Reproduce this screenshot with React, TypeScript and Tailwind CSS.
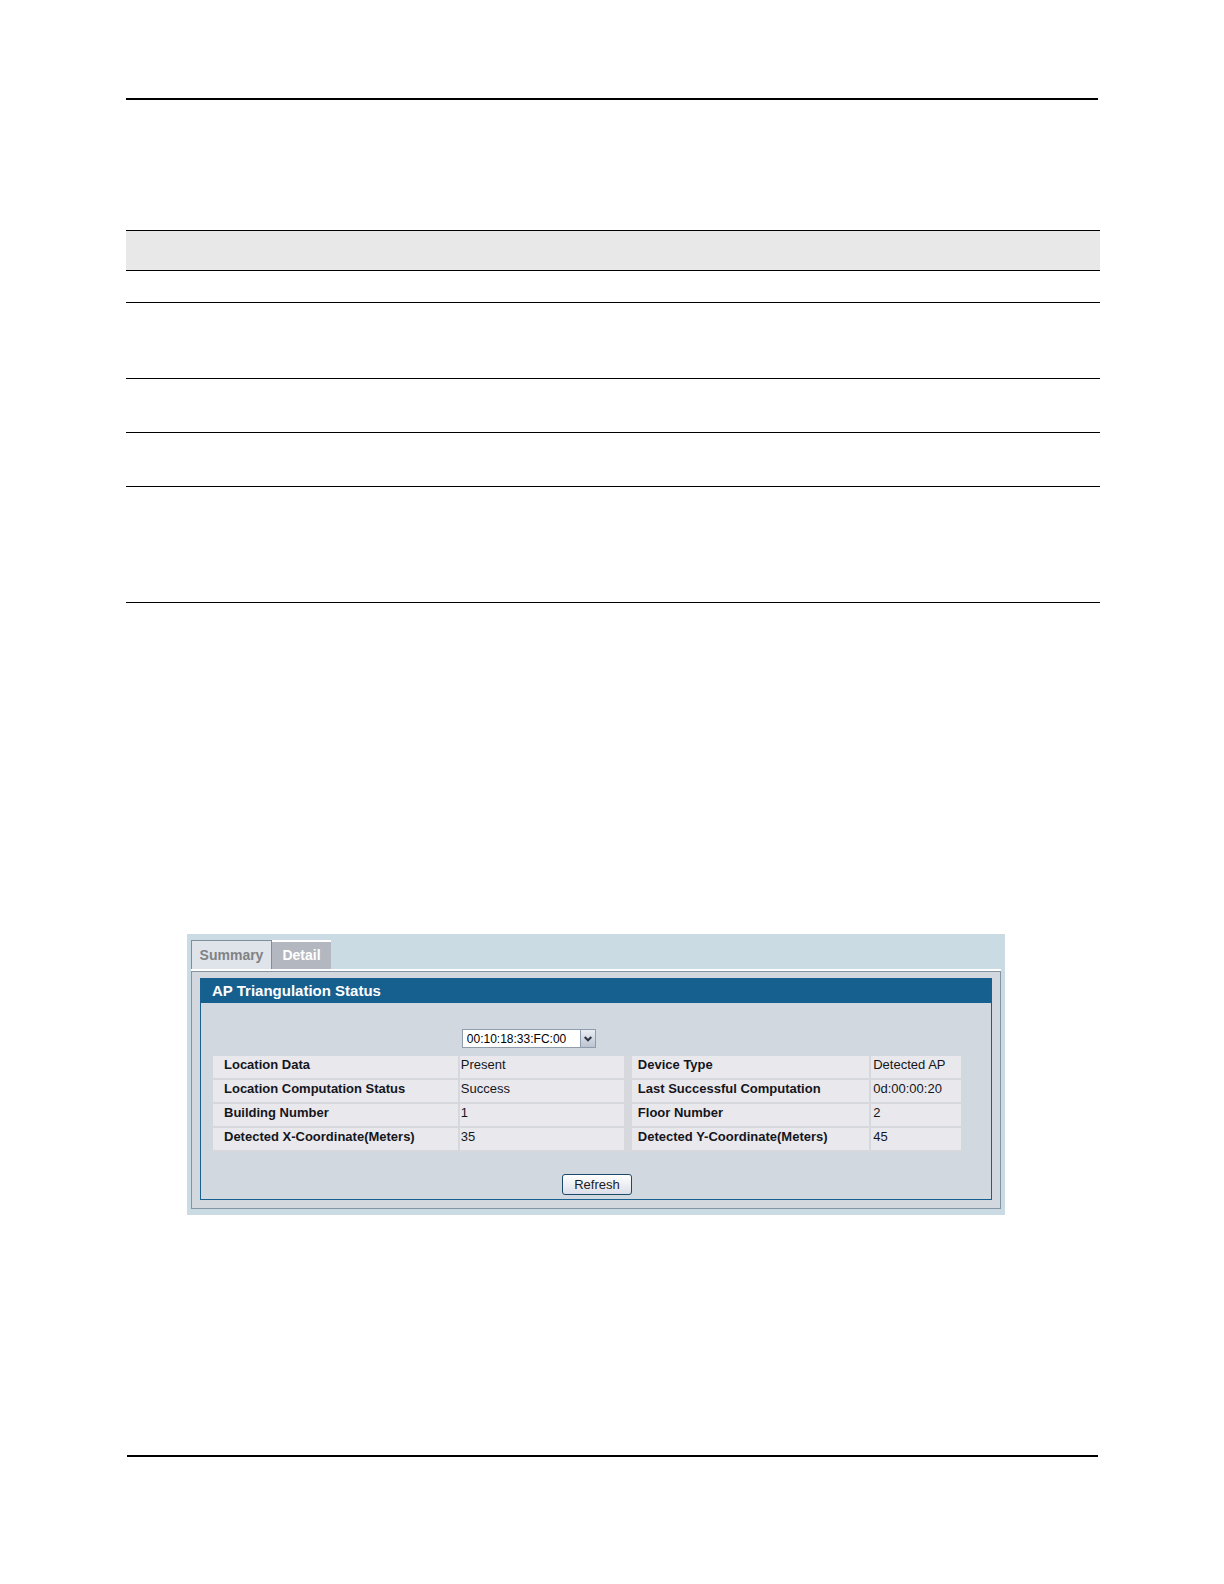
import { useState } from 'react';
import { clsx } from 'clsx';

const DOC_ROWS = ['h-8', 'h-[76px]', 'h-[54px]', 'h-[54px]', 'h-[116px]'];

const STATUS_ROWS = [
  ['Location Data', 'Present', 'Device Type', 'Detected AP'],
  ['Location Computation Status', 'Success', 'Last Successful Computation', '0d:00:00:20'],
  ['Building Number', '1', 'Floor Number', '2'],
  ['Detected X-Coordinate(Meters)', '35', 'Detected Y-Coordinate(Meters)', '45'],
];

const TABS = ['Summary', 'Detail'];

function DocTable() {
  return (
    <table className="mt-[130px] w-full border-collapse">
      <thead>
        <tr className="h-10 border-y border-black bg-[#e8e8e8]">
          <th />
          <th />
        </tr>
      </thead>
      <tbody>
        {DOC_ROWS.map((height, i) => (
          <tr key={i} className={clsx('border-b border-black', height)}>
            <td />
            <td />
          </tr>
        ))}
      </tbody>
    </table>
  );
}

function TabBar() {
  const [active, setActive] = useState('Detail');

  return (
    <div className="flex h-[29px] items-stretch">
      {TABS.map((tab) => (
        <button
          key={tab}
          type="button"
          onClick={() => setActive(tab)}
          className={clsx(
            'text-[14px] font-bold',
            tab === active
              ? 'w-[59px] border-t-2 border-white bg-[#b3b8c0] text-white'
              : 'w-[81px] border border-b-0 border-[#7d8f9c] bg-[#dfe4ea] text-[#7f8285]'
          )}
        >
          {tab}
        </button>
      ))}
    </div>
  );
}

function DeviceSelect() {
  return (
    <div className="relative ml-0.5 h-[19px] w-[134px]">
      <select
        aria-label="Device MAC address"
        defaultValue="00:10:18:33:FC:00"
        className="block h-full w-full appearance-none border border-[#8e9cab] bg-white pl-1 text-[12px] leading-4 text-black"
      >
        <option>00:10:18:33:FC:00</option>
      </select>
      <span className="pointer-events-none absolute inset-y-0 right-0 flex w-4 items-center justify-center border border-[#8e9cab] bg-linear-to-b from-[#e9edf3] to-[#bcc4d2]">
        <svg width="8" height="6" viewBox="0 0 8 6" fill="none" stroke="#2c3440" strokeWidth="2">
          <path d="M0.7 1 L4 4.3 L7.3 1" />
        </svg>
      </span>
    </div>
  );
}

function StatusTable() {
  return (
    <table className="w-full table-fixed border-separate border-spacing-0 text-[13px] leading-[18px] text-[#15151c]">
      <colgroup>
        <col className="w-[33%]" />
        <col className="w-[23%]" />
        <col className="w-[32%]" />
        <col className="w-[12%]" />
      </colgroup>
      <tbody>
        {STATUS_ROWS.map(([label, value, label2, value2]) => (
          <tr key={label} className="h-6">
            <th className="border-r-2 border-b-2 border-[#d6d8de] bg-[#e9e9ed] pb-1 pl-[11px] text-left font-bold whitespace-nowrap">{label}</th>
            <td className="border-r-8 border-b-2 border-[#d6d8de] bg-[#e9e9ed] pb-1 pl-px">{value}</td>
            <th className="border-r-2 border-b-2 border-[#d6d8de] bg-[#e9e9ed] pb-1 pl-1.5 text-left font-bold whitespace-nowrap">{label2}</th>
            <td className="border-b-2 border-[#d6d8de] bg-[#e9e9ed] pb-1 pl-0.5 whitespace-nowrap">{value2}</td>
          </tr>
        ))}
      </tbody>
    </table>
  );
}

function TriangulationPanel() {
  return (
    <section className="mt-[331px] mr-[95px] ml-[61px] bg-[#cadbe3] px-1 pt-1.5 pb-1.5">
      <TabBar />
      <div className="border-t-2 border-white">
        <div className="border border-[#8494a3] bg-[#d3d7de] px-2 pt-1.5 pb-2">
          <div className="border border-[#17608f] bg-[#d2d8df]">
            <h2 className="bg-[#15608f] pl-[11px] text-[15px] leading-6 font-bold text-white">AP Triangulation Status</h2>
            <div className="pt-[26px] pr-[30px] pb-1 pl-3">
              <div className="pb-2 pl-[33%]">
                <DeviceSelect />
              </div>
              <StatusTable />
              <div className="flex justify-center pt-[22px] pl-5">
                <button
                  type="button"
                  className="h-[21px] w-[70px] rounded-[3px] border border-[#1c4a6b] bg-linear-to-b from-white to-[#dcdfea] text-[13px] leading-4 text-[#1a1a22]"
                >
                  Refresh
                </button>
              </div>
            </div>
          </div>
        </div>
      </div>
    </section>
  );
}

export default function App() {
  return (
    <main className="min-h-screen bg-white pt-[98px] pr-[124px] pb-[126px] pl-[126px] font-['Liberation_Sans',Arial,sans-serif]">
      <hr className="mr-0.5 border-t-2 border-black" />
      <DocTable />
      <TriangulationPanel />
      <hr className="mt-[240px] mr-0.5 ml-px border-t-2 border-black" />
    </main>
  );
}
